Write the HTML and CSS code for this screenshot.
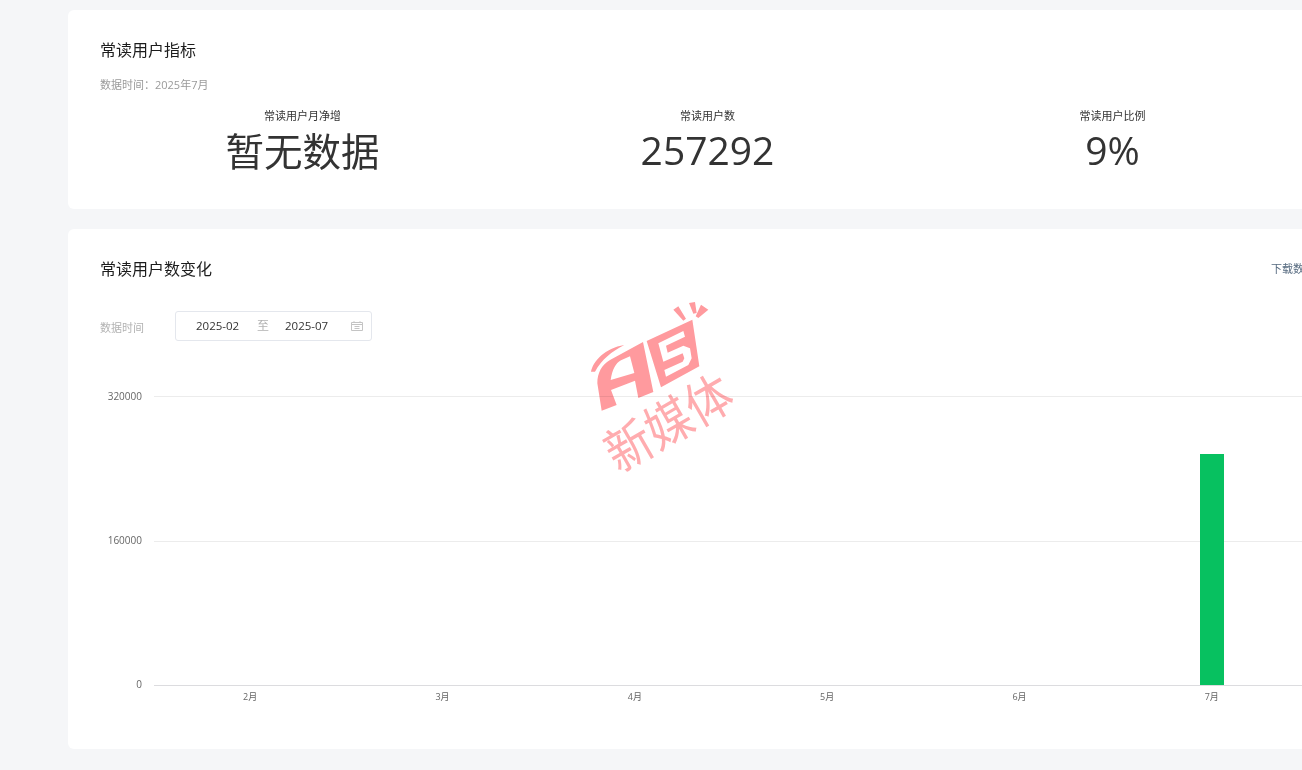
FILE: index.html
```html
<!DOCTYPE html>
<html lang="zh-CN">
<head>
<meta charset="utf-8">
<title>常读用户</title>
<link rel="stylesheet" href="styles.css">
</head>
<body>
<main class="main">
  <section class="card card-metrics">
    <h2 class="card-title">常读用户指标</h2>
    <p class="data-time">数据时间：2025年7月</p>
    <div class="metrics">
      <div class="metric"><div class="metric-label">常读用户月净增</div><div class="metric-value">暂无数据</div></div>
      <div class="metric"><div class="metric-label">常读用户数</div><div class="metric-value metric-num">257292</div></div>
      <div class="metric"><div class="metric-label">常读用户比例</div><div class="metric-value metric-num">9%</div></div>
    </div>
  </section>
  <section class="card card-chart">
    <div class="card-head">
      <h2 class="card-title">常读用户数变化</h2>
      <a class="download">下载数据</a>
    </div>
    <div class="filter">
      <span class="filter-label">数据时间</span>
      <div class="range">
        <span class="range-date">2025-02</span>
        <span class="range-sep">至</span>
        <span class="range-date">2025-07</span>
        <svg class="range-icon" viewBox="0 0 12 10" width="12" height="10" aria-hidden="true">
          <path d="M.5 1.5h11v8H.5zM.5 3.5h11M3 .2v1.6M9 .2v1.6M3.5 5.5h5M3.5 7.5h5" fill="none" stroke="#c4c4c4" stroke-width="1"/>
        </svg>
      </div>
    </div>
    <div class="chart">
      <div class="y-axis"><span>320000</span><span>160000</span><span>0</span></div>
      <div class="chart-main">
        <div class="plot">
          <div class="grid-lines"><i></i><i></i><i class="axis"></i></div>
          <div class="bars">
            <div class="bar-col"></div>
            <div class="bar-col"></div>
            <div class="bar-col"></div>
            <div class="bar-col"></div>
            <div class="bar-col"></div>
            <div class="bar-col"><div class="bar" style="height:231px"></div></div>
          </div>
        </div>
        <div class="x-axis"><span>2月</span><span>3月</span><span>4月</span><span>5月</span><span>6月</span><span>7月</span></div>
      </div>
    </div>
  </section>
</main>
<div class="watermark" aria-hidden="true">
  <svg class="wm-logo" viewBox="0 0 390 345" width="130" height="115">
    <path d="M265 35l15-10 23 37-8 6zM312 15l18-3 5 33-10 2zM348 20l22 15-30 25-8-5z"/>
    <path d="M18 221C24 190 60 150 118 141C80 160 50 185 30 221z"/>
    <path fill-rule="evenodd" d="M50 338L37 256C37 225 50 200 75 186L174 132L205 282L160 300L150 248L78 276L95 321zM77 246L148 225L135 175L108 187C92 195 82 215 77 246z"/>
    <path fill-rule="evenodd" d="M185 129L322 65L343 205L228 268zM220 136L295 99L300 116L243 143L248 164L295 143L315 151L320 181L310 201L243 236L238 216L293 191L298 181L293 166L235 191z"/>
  </svg>
  <div class="wm-text">新媒体</div>
</div>
</body>
</html>
```
FILE: styles.css
```css
* { box-sizing: border-box; }
html, body { margin: 0; height: 770px; width: 1302px; overflow: hidden; }
body {
  position: relative;
  background: #f5f6f8;
  color: #333;
  font-family: "Open Sans", "Noto Sans CJK SC", sans-serif;
}
.main {
  display: flex;
  flex-direction: column;
  gap: 20px;
  width: 1347px;
  padding: 10px 0 0 68px;
}
.card {
  background: #fff;
  border-radius: 6px;
  padding: 29px 32px 0;
}
.card-metrics { height: 199px; }
.card-chart { height: 520px; }
.card-title {
  margin: 0;
  font-size: 16px;
  font-weight: 400;
  line-height: 22px;
  color: #1c1c1c;
}
.card-head { display: flex; justify-content: space-between; align-items: center; }
.download { font-size: 11px; line-height: 22px; color: #576b80; }
.data-time {
  margin: 16px 0 0;
  font-size: 11px;
  line-height: 16px;
  color: #9a9a9a;
}
.metrics { display: grid; grid-template-columns: repeat(3, 405px); margin-top: 15px; }
.metric { text-align: center; }
.metric-label { font-size: 11px; line-height: 16px; color: #333; }
.metric-value {
  margin-top: 4px;
  font-size: 38.5px;
  line-height: 46px;
  color: #333;
}
.metric-num { margin-top: 3px; font-size: 39px; }
.filter { display: flex; align-items: center; margin-top: 31px; }
.filter-label { width: 75px; padding-top: 4px; font-size: 11px; line-height: 26px; color: #b2b2b2; }
.range {
  display: flex;
  align-items: center;
  width: 197px;
  height: 30px;
  padding-left: 20px;
  border: 1px solid #e4e7ed;
  border-radius: 3px;
}
.range-date { padding-bottom: 2px; font-size: 11.5px; width: 44px; color: #333; white-space: nowrap; }
.range-sep { width: 45px; padding: 0 0 2px 17px; font-size: 12px; color: #b2b2b2; }
.range-icon { margin-left: 22px; }
.chart { display: flex; margin-top: 55px; }
.y-axis {
  display: flex;
  flex-direction: column;
  justify-content: space-between;
  align-items: flex-end;
  width: 42px;
  height: 300px;
  margin: -6px 12px 0 0;
  font-size: 10px;
  line-height: 12px;
  color: #666;
}
.chart-main { width: 1154px; }
.plot { display: grid; height: 290px; }
.grid-lines, .bars { grid-area: 1 / 1; }
.grid-lines { display: flex; flex-direction: column; justify-content: space-between; }
.grid-lines i { display: block; height: 1px; background: #ececec; }
.grid-lines .axis { background: #dcdcdf; }
.bars { display: flex; align-items: flex-end; }
.bar-col { flex: 1; display: flex; justify-content: center; }
.bar { width: 24px; margin-bottom: 1px; background: #07c160; }
.x-axis { display: flex; margin-top: 5px; font-size: 9px; line-height: 12px; color: #666; }
.x-axis span { flex: 1; text-align: center; }
.watermark { position: absolute; inset: 0; pointer-events: none; mix-blend-mode: multiply; }
.wm-logo { position: absolute; left: 585px; top: 298px; fill: #ff9a9e; }
.wm-text {
  position: absolute;
  left: 598px;
  top: 392px;
  font-family: "Noto Sans CJK SC", sans-serif;
  font-size: 46px;
  line-height: 56px;
  color: #ffacaf;
  transform: rotate(-30deg) scale(1, 1.1);
  white-space: nowrap;
}
```
